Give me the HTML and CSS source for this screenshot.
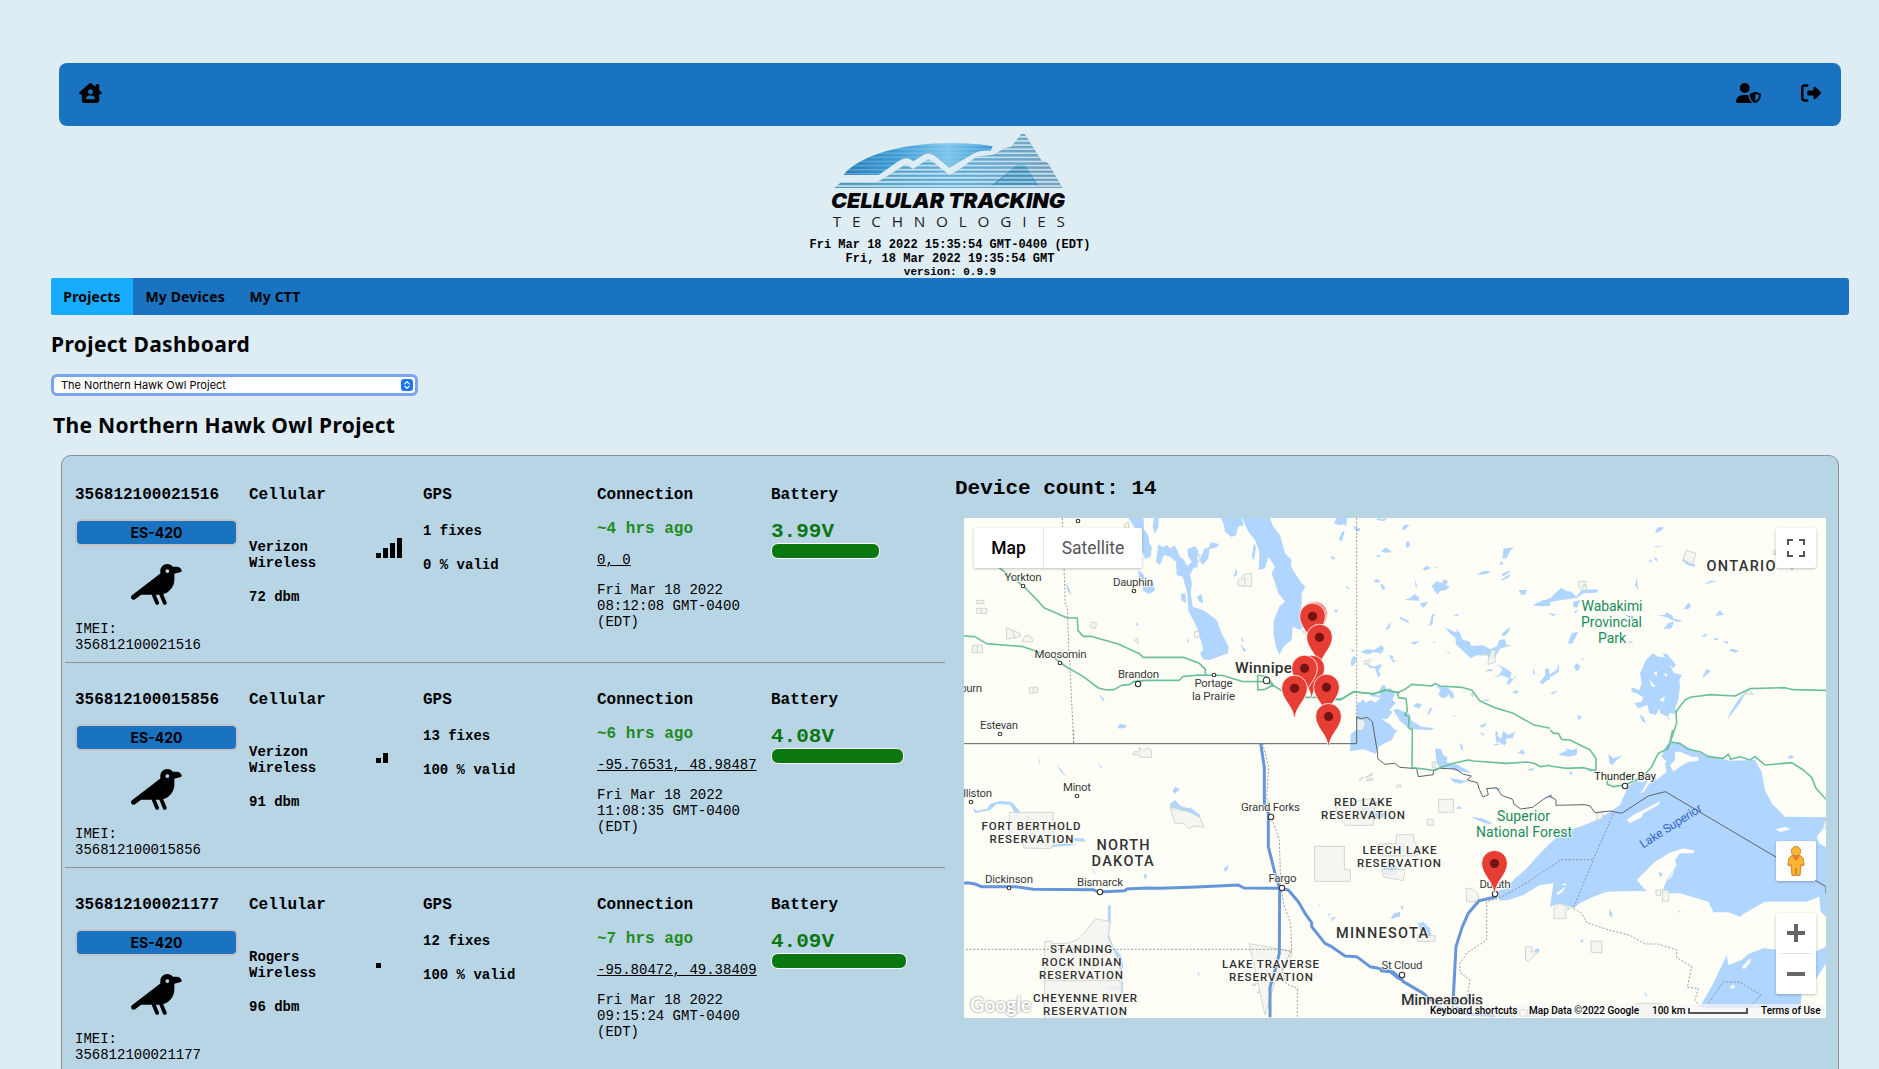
FILE: index.html
```html
<!DOCTYPE html>
<html lang="en">
<head>
<meta charset="utf-8">
<title>Project Dashboard</title>
<link rel="stylesheet" href="styles.css">
</head>
<body>
<svg class="defs" width="0" height="0" aria-hidden="true">
  <symbol id="crow" viewBox="0 0 640 512"><path d="M456 0c-48.6 0-88 39.4-88 88v29.2L12.5 390.6c-14 10.8-16.6 30.9-5.9 44.9s30.9 16.6 44.9 5.9L126.1 384H259.2l46.6 113.1c5 12.3 19.1 18.1 31.3 13.1s18.1-19.1 13.1-31.3L311.1 384H352c1.1 0 2.1 0 3.2 0l46.6 113.2c5 12.3 19.1 18.1 31.3 13.1s18.1-19.1 13.1-31.3l-42-102C484.9 354.1 544 280 544 192V128v-8l80.5-20.1c8.6-2.1 13.8-10.8 11.6-19.4C629 52 603.4 32 574 32H523.9C507.7 12.5 483.3 0 456 0zm0 64a24 24 0 1 1 0 48 24 24 0 1 1 0-48z"/></symbol>
  <symbol id="pin" viewBox="-14 -43 28 44" overflow="visible"><path d="M-.6 1C-1.300-10-12.900-17-12.900-28.200A12.900 12.900 0 0 1 12.900-28.200C12.900-17 1.300-10 .6 1z" fill="#e63e35" stroke="#fff" stroke-width=".8"/><circle cy="-28" r="4.600" fill="#741412"/></symbol>
</svg>
<div class="page">
  <header class="topbar">
    <svg class="icon-home" viewBox="0 0 576 512"><path d="M575.8 255.500c0 18-15 32.100-32 32.100h-32l.7 160.200c.2 35.500-28.500 64.300-64 64.300H128.100c-35.300 0-64-28.700-64-64V287.600H32c-18 0-32-14-32-32.100c0-9 3-17 10-24L266.400 8c7-7 15-8 22-8s15 2 21 7L416 100.700V64c0-17.700 14.300-32 32-32h32c17.700 0 32 14.300 32 32V185l52.800 46.400c8 7 12 15 11 24zM352 224c0-35.300-28.700-64-64-64s-64 28.700-64 64s28.700 64 64 64s64-28.700 64-64zm-96 96c-44.200 0-80 35.800-80 80c0 8.800 7.200 16 16 16H384c8.800 0 16-7.200 16-16c0-44.200-35.800-80-80-80H256z"/></svg>
    <div class="topbar-right">
      <svg class="icon-user" viewBox="0 0 640 512"><path d="M224 256A128 128 0 1 0 224 0a128 128 0 1 0 0 256zm-45.700 48C79.800 304 0 383.800 0 482.300C0 498.700 13.300 512 29.700 512H418.300c1.800 0 3.500-.2 5.300-.5c-76.300-55.100-99.800-141-103.100-200.200c-16.100-4.800-33.100-7.300-50.700-7.300H178.300zm308.800-78.300l-120 48C358 277.400 352 286.200 352 296c0 63.300 25.900 168.800 134.800 214.200c5.900 2.500 12.600 2.500 18.500 0C614.100 464.800 640 359.300 640 296c0-9.800-6-18.600-15.100-22.300l-120-48c-5.700-2.300-12.100-2.300-17.800 0zM591.400 312c-3.900 50.700-27.200 116.700-95.400 149.700V273.800L591.400 312z"/></svg>
      <svg class="icon-exit" viewBox="0 0 512 512"><path d="M377.900 105.900L500.700 228.700c7.200 7.200 11.300 17.100 11.300 27.300s-4.100 20.100-11.300 27.300L377.900 406.100c-6.400 6.400-15 9.900-24 9.900c-18.700 0-33.900-15.200-33.900-33.900l0-62.100-128 0c-17.700 0-32-14.300-32-32l0-64c0-17.700 14.300-32 32-32l128 0 0-62.100c0-18.700 15.200-33.900 33.900-33.900c9 0 17.600 3.600 24 9.900zM160 96L96 96c-17.700 0-32 14.300-32 32l0 256c0 17.700 14.300 32 32 32l64 0c17.700 0 32 14.300 32 32s-14.300 32-32 32l-64 0c-53 0-96-43-96-96L0 128C0 75 43 32 96 32l64 0c17.700 0 32 14.300 32 32s-14.300 32-32 32z"/></svg>
    </div>
  </header>

  <section class="brand">
    <svg class="logo" viewBox="150 36 711 294">
      <defs>
        <linearGradient id="sky" x1="0" x2="1"><stop offset="0" stop-color="#2a7db8"/><stop offset=".35" stop-color="#3d9bd4"/><stop offset=".7" stop-color="#7cc5ea"/><stop offset="1" stop-color="#3b9bd6"/></linearGradient>
        <linearGradient id="rock" x1="0" x2="1"><stop offset="0" stop-color="#4a97b8"/><stop offset=".5" stop-color="#5fb0dc"/><stop offset="1" stop-color="#6f9db8"/></linearGradient>
        <pattern id="stripes" width="20" height="12.300" patternUnits="userSpaceOnUse" y="41"><rect width="20" height="5" y="7" fill="#deecf4" opacity=".85"/></pattern>
        <pattern id="thin" width="20" height="12.300" patternUnits="userSpaceOnUse" y="41"><rect width="20" height="3" y="8" fill="#9fd0ea" opacity=".6"/></pattern>
      </defs>
      <path d="M190 165C240 105 370 70 500 70Q590 69 638 79L632 92Q600 90 578 102L508 144L465 108Q443 93 425 108L400 124Q380 105 355 124L296 165Z" fill="url(#sky)"/>
      <path d="M190 165C240 105 370 70 500 70Q590 69 638 79L632 92Q600 90 578 102L508 144L465 108Q443 93 425 108L400 124Q380 105 355 124L296 165Z" fill="url(#thin)"/>
      <path d="M163 204L184 186H290L310 176L370 137L378 134L400 147L428 128L445 118L462 128L508 166L540 147L590 110L640 104L675 84L694 80L724 42H734L785 122L803 128L848 204Z" fill="url(#rock)"/>
      <path d="M163 204L184 186H290L310 176L370 137L378 134L400 147L428 128L445 118L462 128L508 166L540 147L590 110L640 104L675 84L694 80L724 42H734L785 122L803 128L848 204Z" fill="url(#stripes)"/>
      <path d="M635 196L712 134H734L774 196Z" fill="#2585b5" opacity=".65"/><path d="M635 204L712 134H734L774 204Z" fill="url(#stripes)" opacity=".6"/>
      <text x="153" y="263" font-family="Inter, sans-serif" font-size="62" font-weight="900" font-style="italic" textLength="702" lengthAdjust="spacingAndGlyphs" fill="#050505">CELLULAR TRACKING</text>
      <text x="158" y="321" font-family="Open Sans, sans-serif" font-size="46" font-weight="400" textLength="697" fill="#1d1d1f">TECHNOLOGIES</text>
    </svg>
    <div class="stamp">Fri Mar 18 2022 15:35:54 GMT-0400 (EDT)</div>
    <div class="stamp">Fri, 18 Mar 2022 19:35:54 GMT</div>
    <div class="version">version: 0.9.9</div>
  </section>

  <nav class="tabs">
    <a class="tab active">Projects</a><a class="tab">My Devices</a><a class="tab">My CTT</a>
  </nav>

  <h1 class="heading">Project Dashboard</h1>
  <div class="select"><span>The Northern Hawk Owl Project</span>
    <svg viewBox="0 0 12 12"><rect width="12" height="12" rx="3" fill="#1a77fb"/><path d="M3.800 4.800L6 2.600l2.200 2.200M3.800 7.200L6 9.400l2.200-2.200" fill="none" stroke="#fff" stroke-width="1.200" stroke-linecap="round" stroke-linejoin="round"/></svg>
  </div>
  <h2 class="heading project">The Northern Hawk Owl Project</h2>

  <main class="panel">
    <div class="devices">
      <article class="device">
        <div class="cell"><h3>356812100021516</h3><button class="model">ES-420</button><svg class="bird"><use href="#crow"/></svg><p class="imei">IMEI:<br>356812100021516</p></div>
        <div class="cell"><h3>Cellular</h3><div class="cellular"><div class="carrier"><b>Verizon<br>Wireless</b><b>72 dbm</b></div><div class="bars"><i class="b1"></i><i class="b2"></i><i class="b3"></i><i class="b4"></i></div></div></div>
        <div class="cell"><h3>GPS</h3><b class="fixes">1 fixes</b><b class="valid">0 % valid</b></div>
        <div class="cell"><h3>Connection</h3><b class="ago">~4 hrs ago</b><a class="coords">0, 0</a><p class="date">Fri Mar 18 2022 08:12:08 GMT-0400 (EDT)</p></div>
        <div class="cell"><h3>Battery</h3><b class="volts">3.99V</b><div class="charge" style="width:109px"></div></div>
      </article>
      <article class="device">
        <div class="cell"><h3>356812100015856</h3><button class="model">ES-420</button><svg class="bird"><use href="#crow"/></svg><p class="imei">IMEI:<br>356812100015856</p></div>
        <div class="cell"><h3>Cellular</h3><div class="cellular"><div class="carrier"><b>Verizon<br>Wireless</b><b>91 dbm</b></div><div class="bars"><i class="b1"></i><i class="b2"></i></div></div></div>
        <div class="cell"><h3>GPS</h3><b class="fixes">13 fixes</b><b class="valid">100 % valid</b></div>
        <div class="cell"><h3>Connection</h3><b class="ago">~6 hrs ago</b><a class="coords">-95.76531, 48.98487</a><p class="date">Fri Mar 18 2022 11:08:35 GMT-0400 (EDT)</p></div>
        <div class="cell"><h3>Battery</h3><b class="volts">4.08V</b><div class="charge" style="width:133px"></div></div>
      </article>
      <article class="device">
        <div class="cell"><h3>356812100021177</h3><button class="model">ES-420</button><svg class="bird"><use href="#crow"/></svg><p class="imei">IMEI:<br>356812100021177</p></div>
        <div class="cell"><h3>Cellular</h3><div class="cellular"><div class="carrier"><b>Rogers<br>Wireless</b><b>96 dbm</b></div><div class="bars"><i class="b1"></i></div></div></div>
        <div class="cell"><h3>GPS</h3><b class="fixes">12 fixes</b><b class="valid">100 % valid</b></div>
        <div class="cell"><h3>Connection</h3><b class="ago">~7 hrs ago</b><a class="coords">-95.80472, 49.38409</a><p class="date">Fri Mar 18 2022 09:15:24 GMT-0400 (EDT)</p></div>
        <div class="cell"><h3>Battery</h3><b class="volts">4.09V</b><div class="charge" style="width:136px"></div></div>
      </article>
    </div>

    <section class="overview">
      <h2 class="count">Device count: 14</h2>
      <div class="map">
        <svg class="tiles" viewBox="964 518 862 500">
          <!-- water -->
          <g class="water">
            <g transform="translate(940 460) scale(.33333)">
              <path d="M565 174H610L613 210L625 225L628 250L636 262L632 290L615 296L606 270L600 235L585 205ZM642 174H656L655 200L645 222L638 200ZM655 253L668 262L682 255L690 265L705 256L720 290L732 300L742 318L755 305L745 290L742 268L765 258L775 272L773 322L760 325L750 345L756 370L752 400L758 440L790 450L830 480L845 520L866 560L864 580L835 590L808 600L790 598L780 580L790 570L782 540L770 500L745 452L742 400L728 350L710 345L708 305L690 290L672 285L660 315L648 305ZM780 300L792 268L808 262L812 247L838 252L830 262L808 268L805 295L788 315ZM722 402L736 400L738 430L725 422ZM770 410L785 402L790 430L778 425ZM595 330L612 345L615 365L640 370L645 392L625 402L608 390L610 370L597 355ZM843 174H905L912 195L895 200L888 225L875 231L855 215L850 190ZM907 174H990L1000 200L1020 225L1028 255L1035 280L1055 300L1052 315L1062 335L1085 370L1096 380L1085 400L1085 430L1080 470L1090 500L1080 510L1058 500L1055 540L1030 560L1018 585L1008 560L1000 520L1002 480L1018 440L1035 425L1015 400L995 340L1005 320L985 290L975 325L957 330L958 275L945 240L925 215ZM1000 340L1020 380L1010 385ZM935 290L942 250L948 262L942 300ZM376 368L385 380L395 405L384 395ZM477 702L495 720L488 722ZM532 800L540 792L560 795L556 803L538 806ZM585 490H595V500ZM740 545L745 533V550ZM905 528L912 545H905ZM898 550L920 572L912 575ZM880 350L890 325L892 345Z"/>
            </g>
            <g transform="translate(1310 516) scale(.33333)">
              <path d="M72 22L80 6H112L108 30L100 25L85 28ZM96 48L104 44L96 77L86 70ZM130 30L152 38L145 48L135 42ZM62 118L77 128L66 131ZM198 8L215 6L205 14ZM205 12L230 6L222 15ZM276 40L290 26L298 28L282 42ZM288 80L295 75L300 90L290 96ZM215 102L228 95L244 106L240 110L225 104ZM198 118L215 118L205 125ZM338 158L350 149L364 156L345 164ZM370 152H383L376 157ZM500 178L518 165L542 165L532 173ZM578 128L580 98L612 94L600 104L590 127ZM568 146L573 135L582 144ZM573 175L600 163L595 172L580 180ZM572 192L600 173L598 183L580 193ZM366 210L380 195L395 202L402 190L414 195L408 207L419 212L408 222L390 225L384 235L374 226ZM315 190L322 213L316 212ZM190 195L200 188L212 197L204 200ZM212 205L218 203L226 222L215 216ZM106 213L113 210L119 221ZM284 252L302 245L313 234L328 244L325 254ZM330 262L354 257L342 275L335 273ZM626 222H650L645 235L634 236ZM670 268L690 258L712 250L720 244V270L690 271ZM70 282L83 280L80 291ZM228 338L242 317L240 335L230 343ZM266 300L295 314L298 322L275 312ZM360 320L366 295L378 293L370 300L368 325L356 330ZM430 298L447 293L442 301ZM404 334L440 350V338L450 352L458 372L478 376L484 390L520 388L540 400L562 390L567 372L585 370L590 388L608 386L570 398L552 430L538 428L530 415L500 418L482 427L462 408L438 385L436 365L420 352ZM572 358L585 345L600 333L598 345L585 360ZM302 378L330 376L312 386ZM366 378L377 377L376 382ZM152 408L170 400L192 402L215 388L222 398L218 408L210 412L190 408L178 415L160 412ZM208 408L214 416L208 414ZM236 416L250 420L248 430L260 437L248 437ZM160 432L178 447L195 452L208 445L216 448L205 465L212 473L206 486L194 456L180 456ZM122 398L132 402L130 410ZM125 425L133 420L140 430L130 450L122 448ZM522 466L538 460L550 462L545 466ZM546 486L568 476L578 460L560 445L585 456L605 470L600 488L575 478ZM670 460L676 475H668ZM688 500L706 478L705 460L716 456L720 490L700 498ZM408 410L418 409V413ZM376 510L390 513L410 512L430 530L432 545L424 548L415 535L408 545L395 545L385 535L392 522ZM308 570L322 561L335 565L328 578ZM482 534L492 532L487 546ZM510 554L540 548L533 555ZM590 500L600 485L612 490L595 506ZM606 530L620 522L625 528L618 533ZM612 480L620 483L615 488ZM350 600L358 578L368 574L360 590ZM508 630L526 622L531 625L518 635ZM428 600L434 597L436 603ZM210 516L222 505L230 520L242 516L254 535L248 552L258 560L238 582L248 588L232 608L215 610L240 625L258 645L245 672L208 690L198 714L190 710L160 700L120 706L122 655L140 640V572L158 550L168 560L182 552L196 560L212 545L180 540L190 532L208 540ZM250 582L262 578L300 595L302 612L335 632L370 636L365 642L300 640L270 615ZM142 560L166 558L155 580L140 590ZM555 650L564 645L563 660L578 672L560 682ZM578 675L592 678L582 690ZM545 688L560 683L575 686ZM600 655L607 650L605 660ZM626 708L640 703L645 716ZM375 698H393L400 718L412 724L410 738L440 745L485 770L435 765L420 755L390 756L380 740ZM650 760L672 757L665 764ZM420 786L475 796L450 803L430 798ZM150 870L185 860L205 855L210 862L180 885L190 900L150 910L135 905ZM180 905L190 890L220 885L230 900L190 912ZM438 878L450 870L453 878ZM482 903L520 908L545 920L525 922ZM255 985L280 982L290 1000L275 1015L258 1010ZM220 1055L235 1045L262 1052L258 1072L235 1078L218 1070ZM180 988L186 985L186 993Z"/>
            </g>
            <g transform="translate(1380 460) scale(.33333)">
              <path d="M458 436L490 420L505 423L525 400L545 384L558 392L575 395L588 410L605 390L655 388L650 398L610 400L590 414L545 420L512 426L505 438ZM415 390L440 390L435 404L425 403ZM580 425L600 420L592 443L580 440ZM506 460L530 463L518 469ZM565 545L575 520L595 515L578 550L565 552ZM583 455L596 448L586 462ZM730 463L760 468L770 490L755 478ZM830 465H855L860 456L878 468L880 476L910 482L890 486L860 472ZM850 508L866 488L882 486L875 505ZM765 375L772 352V368L775 390ZM970 374L990 362L1015 362ZM910 448L925 428L934 438L925 447ZM1005 467L1020 450L1032 465ZM962 528L985 520L975 531ZM1000 540L1010 532L1015 540ZM1028 545L1042 543L1045 553ZM1045 571L1058 566L1078 573L1065 578ZM965 656L980 626L993 634ZM825 220L832 202H853L842 213ZM820 258L853 260L828 262ZM805 306L812 297L817 304ZM820 292L833 296L830 305ZM905 300L915 295L925 310L945 313V321L922 315ZM1230 322H1242L1236 332ZM66 205L72 195L88 194L72 210ZM77 255L85 242L90 255L82 264ZM480 670L490 655L530 630L538 606L536 636L505 655L490 672ZM458 625L463 632L460 640ZM510 700L535 690L520 703ZM582 620L590 610L600 617L598 630L588 633ZM600 598L612 595L608 600ZM590 766L605 768L598 783ZM752 543L762 547L740 549ZM665 500L675 502L645 505ZM780 640L798 600L818 580L835 590L855 592L870 612L880 638L906 645L898 660L900 680L895 720L886 740L888 762L870 758L862 770L840 760L838 745L828 765L808 760L802 735L775 745L762 730L785 725L790 712L770 700L754 695L755 682L778 690L785 670ZM848 580L862 583L888 615L880 625L860 600ZM865 765L870 780L863 775ZM778 763L790 770L798 790L788 785ZM1040 785L1050 758L1078 715L1103 688L1080 730L1050 768ZM0 180L18 174L15 182ZM2 275L18 265L33 275L20 278ZM2 375L15 380L8 392Z"/>
              <path class="land" d="M820 640L830 632L832 648ZM852 640L862 642L858 652ZM808 658L828 680L815 680ZM838 720L855 708L850 725Z"/>
            </g>
            <g transform="translate(940 730) scale(.33333)">
              <path d="M98 232L110 243L142 236L150 222L180 213L215 216L240 245L230 258L210 224L170 222L150 240L105 250ZM255 258L268 255L275 300L300 330L330 345L380 340L410 345L330 352L305 345L275 315ZM400 325L430 325L436 336L400 332ZM297 80L300 102L296 98ZM350 103L372 130L378 141L360 122ZM474 98L488 115L480 112ZM690 222L705 210L722 228L745 235L750 232L780 255V265L745 245L705 245L692 240ZM698 182L705 170L720 178L702 192ZM612 432H620V447L613 445ZM850 418L866 402L862 420L855 425ZM503 528L512 524V570L505 610L520 650L545 680L550 710L535 735L550 760L548 800L535 830L538 860L528 858L540 780L500 775L495 770L540 765L528 735L540 705L530 675L500 635L504 570ZM453 410L468 432L462 430ZM772 735L777 722L778 736ZM996 712L1006 715L996 738ZM932 768L952 757L945 768ZM950 788L960 778L957 790ZM1134 522L1143 528H1138ZM1170 575L1178 562L1190 562ZM1163 550L1172 552L1168 558ZM1352 565L1362 550L1380 545V560Z"/>
            </g>
            <g transform="translate(1380 730) scale(.33333)">
              <path d="M345 485L380 475L400 450L440 415L480 370L510 340L550 305L600 290L650 270L690 245L720 225L735 190L745 168L770 152L795 160L780 190L792 185L815 150L860 95L845 80L855 50L870 38L905 42L935 58L970 72L1050 92L1125 90L1145 125L1155 180L1175 220L1215 260L1338 262V285L1310 320L1318 340L1338 352V560L1322 545L1318 500L1280 515L1155 515L1090 552L1080 560L1045 547L1000 547L985 515L900 490L845 490L850 465L875 440L885 415L860 455L845 470L845 490L820 480L795 484L770 483L680 485L640 500L600 520L580 535L540 520L510 530L520 460L480 465L430 495L385 510L360 512ZM960 830L1000 760L1040 675L1045 705L1085 690L1105 672L1150 655L1200 660L1250 690L1338 650V700L1300 760L1265 790L1262 835H985ZM0 0H55L20 30L0 50ZM360 40L370 2L385 15L405 5L398 25L380 25L372 45ZM300 5L312 12L308 18ZM240 45L245 38L250 60L244 60ZM412 70L428 58L435 73ZM535 74L550 65L562 62L555 55L575 60L592 55L590 75L565 80ZM685 72L700 85L728 75L705 95L698 105L688 100ZM440 120L460 115L458 122ZM567 128L575 122L578 138ZM610 118L640 120L635 127ZM1222 80L1235 75L1243 82L1230 87ZM228 233L240 228L243 236ZM272 260L300 265L340 280L325 282L310 275ZM687 538L697 550L696 563L688 555ZM892 542L905 545L898 548ZM600 630L612 628L606 640ZM463 660L475 655L480 664L468 670ZM33 562L45 552L62 550L50 560L38 568ZM60 530L70 527L68 540ZM114 580L130 575L150 595L155 618L125 615ZM5 420L30 410L55 425L50 435L15 440ZM790 780L802 797L798 800Z"/>
              <path class="land" d="M740 270L760 255L800 235L842 213L835 225L790 250L785 262L750 280ZM885 65L900 65L935 80L955 80L955 92L925 95L900 110L880 125L870 105L885 90ZM825 135L855 100L860 125L830 150ZM770 450L800 420L825 395L870 368L910 355L945 362L940 370L900 370L885 390L890 405L860 450L845 490L800 484ZM1187 298L1215 290L1232 298L1200 306ZM530 490L545 478L558 470L545 488L532 494ZM543 462L560 460L555 467ZM1050 770L1060 763L1065 772L1055 778ZM1085 712L1105 690L1115 684L1108 702L1092 718Z"/>
              <path d="M835 426L848 430L842 444ZM495 200L515 196L518 207ZM325 175L360 173V180ZM790 155L805 150L785 185L780 180Z"/>
            </g>
          </g>

          <!-- reserves and small parks -->
          <g class="reserve">
            <g transform="translate(940 460) scale(.33333)"><path d="M109 421H132V431H109ZM110 445H140V460H110ZM124 445V460M97 556H127V578H97ZM112 556V578M199 503L240 520L242 530L210 535L199 538ZM218 512L225 535M245 545L255 527L270 528L278 540V546ZM450 500L455 485L470 490L465 507ZM268 682H293V698L268 700ZM280 684V698M554 192L566 185V205H554ZM768 295L780 282V308ZM894 360L915 342L935 340V379L894 378ZM904 360L915 352V378M583 541L594 535V552ZM763 515L778 513V532H764ZM1086 512L1102 510L1096 524Z"/></g>
            <g transform="translate(1310 516) scale(.33333)"><path d="M162 437L180 430L182 437L165 447ZM140 612L160 610L166 625L160 642L140 643ZM545 400L556 402L555 440L534 445L536 425ZM505 417H540M366 738L376 737V754H367ZM148 790L160 782L150 795ZM165 785L188 772L186 778ZM168 793H188V785ZM258 813L268 803L274 813ZM386 850H431V889H386ZM352 910H370V928H352ZM14 991H103V1060L121 1062V1096H14ZM78 868L196 845L190 928H107L78 895ZM202 985L258 982L260 956H310L312 975L330 1000L320 1020H215ZM215 1060L220 1083L280 1094L285 1060Z"/></g>
            <g transform="translate(1380 460) scale(.33333)"><path d="M595 364H620L605 390L596 380ZM608 378L620 373V390H610M918 271L948 280L938 311L909 300ZM1180 271H1188V283H1180ZM1094 702L1106 690L1121 703Z"/></g>
            <g transform="translate(940 730) scale(.33333)"><path d="M598 52L610 62L622 53L635 62V82H598V76L578 72L583 65L598 66ZM208 247H339V350L330 356L250 354V335H208ZM690 230L705 280L730 280L746 296L762 288L792 292L780 262L745 245ZM314 635L335 632V640L382 640L410 630L440 600L467 566L512 575L505 620L535 690L545 740V752L548 865H314ZM314 752H540M928 641L1057 664L1048 700L1010 740L975 855Z"/></g>
            <g transform="translate(1380 730) scale(.33333)"><path d="M522 535L540 520L570 537L558 540V566H522ZM650 250L670 245L668 265L650 272ZM632 633L666 634V669L634 667ZM437 650L458 651L453 665L475 667L445 693L436 690ZM828 480H842V496H828ZM847 480H866V514H848ZM258 474Q290 475 296 500L294 515H260ZM112 616L165 617V634H112ZM770 820H840V858H770ZM1338 265L1328 290L1338 297"/></g>
          </g>

          <!-- boundaries -->
          <g class="dotted">
            <g transform="translate(940 460) scale(.33333)"><path d="M367 174L376 435L382 440L386 560L391 640L401 850M1250 174V770"/></g>
            <g transform="translate(940 730) scale(.33333)"><path d="M401 0V40M78 658H1018L1057 664M968 40L986 110L980 200L990 250L1018 330L1022 460L1030 520L1052 580L1055 660L1025 720L1040 762L1072 775V862"/></g>
            <g transform="translate(1380 730) scale(.33333)"><path d="M700 252L640 388L580 535L605 550L620 578L680 598L750 616L795 642H835L890 660V682L935 710L922 772L955 775L945 810L960 830M638 389H545L430 465L356 505L320 515V630L262 668L240 700V728L270 750L262 800L240 830M985 820L1030 756H1080L1144 796L1080 858"/></g>
          </g>
          <g class="border">
            <g transform="translate(940 460) scale(.33333)"><path d="M72 851H1250V770"/></g>
            <g transform="translate(1310 516) scale(.33333)"><path d="M139 603L155 608L172 604L187 617L203 712V728L225 745L254 742L270 754L320 758L325 782L370 776V765L390 757L437 759L460 775L484 780L472 792L502 800L508 820L519 843L535 836L530 818L560 815L575 838L608 850L612 864L632 879L668 874L700 850L724 837"/></g>
            <g transform="translate(1380 730) scale(.33333)"><path d="M510 198L528 210V226L615 224L630 228L645 248L690 243L725 250L805 198L856 185L1338 470V490"/></g>
          </g>

          <!-- roads -->
          <g class="road">
            <g transform="translate(940 460) scale(.33333)"><path d="M176 322L250 378L296 425L312 443L382 474H412L414 512L430 529H452L535 552L600 582L608 592H730L778 610L796 628V646M72 528L104 530L140 551L250 560L340 592L375 618L430 650L475 684L500 690L522 689L545 676L570 673L580 665L620 661H718L728 650L775 645L845 646L905 664L980 665L1022 690L1080 712L1130 712L1200 720L1240 695L1300 702L1340 690L1380 698M953 645V690L975 688L1000 675L980 650L953 645"/></g>
            <g transform="translate(1310 516) scale(.33333)"><path d="M75 550L98 548L130 528L190 533L225 522L262 530L285 520L305 505L365 510L376 502L390 510L455 514L485 522L500 542L510 555L555 575L610 592L670 626L720 637M262 530L266 545L288 548L292 585L284 597L298 602L295 635L307 642L306 755L370 763L390 755L430 742L475 732L490 735L590 742L650 738L672 742L692 752L720 748"/></g>
            <g transform="translate(1380 730) scale(.33333)"><path d="M511 0L520 10H535L545 28L570 30L630 60L648 85V122M682 150V163L700 170L735 165L790 140L815 110L835 70L860 58L870 36L900 40L925 58L960 65L985 80L1030 85L1045 72L1052 88L1080 80L1110 90L1125 80L1155 105L1235 98L1270 120L1295 142L1308 175L1338 208M870 36L878 0M510 108L560 115L610 113L648 122"/></g>
            <g transform="translate(1380 460) scale(.33333)"><path d="M862 870L870 848L890 790L888 755L915 720L930 712L990 704L1065 708L1110 686L1215 683L1240 689L1338 691"/></g>
          </g>
          <g class="highway">
            <g transform="translate(940 730) scale(.33333)"><path d="M72 460L82 458L105 462L124 470H225L280 478L460 479L475 486L555 482L560 477L620 474L660 475L770 471L895 465L912 474L1015 475L1045 480L1075 515L1095 550L1115 578V590L1155 640L1175 650L1215 678L1250 680L1290 710L1315 715L1350 724L1375 745L1390 748M962 40L973 112V220L985 250V350L1005 430L1019 475L1018 670L1003 730L990 772V862"/></g>
            <g transform="translate(1380 730) scale(.33333)"><path d="M0 722L40 726L70 755L130 790L200 850M350 500L297 512L265 550L247 590L228 650L220 800L240 850L345 858"/></g>
          </g>

          <!-- place markers -->
          <g class="towns">
            <circle cx="1078" cy="521" r="1.800"/><circle cx="1023" cy="586" r="1.800"/><circle cx="1134" cy="591" r="1.800"/><circle cx="1060" cy="663" r="1.800"/><circle cx="1138" cy="684" r="2.700"/><circle cx="1214" cy="675" r="1.800"/><circle cx="1266.500" cy="680.500" r="3.200"/><circle cx="1000" cy="734" r="1.800"/><circle cx="971" cy="802" r="1.800"/><circle cx="1077" cy="796" r="1.800"/><circle cx="1271" cy="817" r="2.700"/><circle cx="1009" cy="888" r="1.800"/><circle cx="1100" cy="892" r="2.700"/><circle cx="1282" cy="888" r="2.700"/><circle cx="1625" cy="786" r="2.700"/><circle cx="1495" cy="894" r="2.700"/><circle cx="1402" cy="975" r="2.700"/>
          </g>

          <!-- labels -->
          <g class="labels">
            <text x="1023" y="581" textLength="37">Yorkton</text><text x="1133" y="586" textLength="40">Dauphin</text><text x="1060.500" y="658" textLength="52">Moosomin</text><text x="1138.500" y="678" textLength="41">Brandon</text><text x="1213.500" y="687" textLength="38">Portage</text><text x="1213.500" y="700" textLength="43">la Prairie</text><text x="999" y="729" textLength="38">Estevan</text><text x="982" y="692" class="end" textLength="42">Weyburn</text><text x="992" y="797" class="end" textLength="41">Williston</text><text x="1077" y="791" textLength="28">Minot</text><text x="1270.500" y="811" textLength="59">Grand Forks</text><text x="1009" y="883" textLength="48">Dickinson</text><text x="1100" y="886" textLength="46">Bismarck</text><text x="1282.500" y="882" textLength="28">Fargo</text><text x="1625" y="780" textLength="62" class="dark">Thunder Bay</text><text x="1495" y="888" textLength="31">Duluth</text><text x="1402" y="969" textLength="41">St Cloud</text><text x="1522" y="1017" textLength="48" opacity=".5">Eau Claire</text>
            <g class="city"><text x="1235" y="673" class="start" textLength="66">Winnipeg</text><text x="1442" y="1005" textLength="82">Minneapolis</text></g>
            <g class="tribal"><text x="1031" y="830" textLength="99">FORT BERTHOLD</text><text x="1031.500" y="843" textLength="84">RESERVATION</text><text x="1363" y="806" textLength="58">RED LAKE</text><text x="1363" y="819" textLength="84">RESERVATION</text><text x="1399.500" y="854" textLength="74">LEECH LAKE</text><text x="1399" y="867" textLength="84">RESERVATION</text><text x="1081" y="953" textLength="62">STANDING</text><text x="1081.500" y="966" textLength="80">ROCK INDIAN</text><text x="1081" y="979" textLength="84">RESERVATION</text><text x="1085" y="1002" textLength="104">CHEYENNE RIVER</text><text x="1085" y="1015" textLength="84">RESERVATION</text><text x="1270.500" y="968" textLength="97">LAKE TRAVERSE</text><text x="1271" y="981" textLength="84">RESERVATION</text></g>
            <g class="state"><text x="1123" y="850" textLength="53">NORTH</text><text x="1122.500" y="866" textLength="62">DAKOTA</text><text x="1382" y="938" textLength="92">MINNESOTA</text><text x="1741" y="571" textLength="69">ONTARIO</text></g>
            <g class="park"><text x="1612" y="611" textLength="61">Wabakimi</text><text x="1611.500" y="627" textLength="61">Provincial</text><text x="1612" y="643" textLength="28">Park</text><text x="1523.500" y="821" textLength="53">Superior</text><text x="1524" y="837" textLength="96">National Forest</text></g>
            <text class="lake" transform="translate(1643 848.500) rotate(-32.500)" textLength="71">Lake Superior</text>
          </g>

          <g class="pins">
            <use href="#pin" x="1300.500" y="599.500" width="28" height="44"/><use href="#pin" x="1299.500" y="600.500" width="28" height="44"/>
            <use href="#pin" x="1298.500" y="601.300" width="28" height="44"/><use href="#pin" x="1305.500" y="622.300" width="28" height="44"/>
            <use href="#pin" x="1297.700" y="653.300" width="28" height="44"/><use href="#pin" x="1290.500" y="653.300" width="28" height="44"/>
            <use href="#pin" x="1312.500" y="672.300" width="28" height="44"/><use href="#pin" x="1280.500" y="673.300" width="28" height="44"/>
            <use href="#pin" x="1314.500" y="701.500" width="28" height="44"/><use href="#pin" x="1480.500" y="848.500" width="28" height="44"/>
          </g>
        </svg>

        <div class="map-type"><span class="on">Map</span><span>Satellite</span></div>
        <div class="ctl fullscreen"><svg viewBox="0 0 18 18"><path d="M0 0h6v2H2v4H0zM12 0h6v6h-2V2h-4zM0 12h2v4h4v2H0zM16 12h2v6h-6v-2h4z" fill="#555"/></svg></div>
        <div class="ctl pegman"><svg viewBox="0 0 18 30"><path d="M5 9.500L2 12L.8 19L3 20L4 18.500L5 29.500H8.400L9 22L9.600 29.500H13L14 18.500L15 20L17.200 19L16 12L13 9.500Z" fill="#fbb330" stroke="#c47f1c" stroke-width=".9"/><circle cx="9" cy="5.200" r="4.700" fill="#fbb330" stroke="#b98134" stroke-width=".9"/><path d="M5.200 10.200H12.800L9 15Z" fill="#e5762a"/></svg></div>
        <div class="ctl zoom"><svg class="plus" viewBox="0 0 18 18"><path d="M7 0h4v7h7v4h-7v7H7v-7H0V7h7z" fill="#666"/></svg><hr><svg class="minus" viewBox="0 0 18 4"><path d="M0 0h18v4H0z" fill="#666"/></svg></div>
        <div class="google">Google</div>
        <div class="credits"><span class="c1">Keyboard shortcuts</span><span class="c2">Map Data ©2022 Google</span><span class="c3">100 km</span><i></i><span class="c4">Terms of Use</span></div>
      </div>
    </section>
  </main>
</div>
</body>
</html>
```
FILE: styles.css
```css
* { box-sizing: border-box; }
body { margin: 0; background: #deecf4; color: #000; font-family: "Noto Sans", sans-serif; }
h1, h2, h3, p { margin: 0; }
svg { display: block; }
.defs { position: absolute; }

.page { height: 1069px; overflow: hidden; padding: 63px 30px 0 51px; }

.topbar { height: 63px; margin: 0 8px; padding: 0 20px 3px; display: flex; align-items: center; justify-content: space-between; background: #1a73c0; border-radius: 8px; }
.topbar-right { display: flex; gap: 40px; }
.icon-home { width: 23px; height: 20px; }
.icon-user { width: 25px; height: 20px; }
.icon-exit { width: 20px; height: 20px; }

.brand { height: 152px; padding-top: 6px; display: flex; flex-direction: column; align-items: center; font-family: "Liberation Mono", monospace; font-weight: bold; }
.logo { width: 237px; height: 98px; margin: 0 3px 8px 0; flex: none; }
.stamp { font-size: 12px; line-height: 14px; }
.version { font-size: 11px; line-height: 12px; }

.tabs { display: flex; height: 37px; background: #1a73c0; border-radius: 3px; overflow: hidden; font-weight: bold; font-size: 14px; line-height: 37px; letter-spacing: .15px; }
.tab { padding: 0 12.300px; }
.active { background: #18acff; }

.heading { font-size: 21px; line-height: 28px; font-weight: bold; margin-top: 15px; white-space: nowrap; letter-spacing: .38px; }
.select { width: 367px; height: 22px; margin-top: 16px; padding: 0 2px 0 7px; display: flex; align-items: center; justify-content: space-between; background: #fff; border: 3px solid #7ba3f0; border-radius: 6px; font: 11px Inter, sans-serif; }
.select svg { width: 12px; height: 12px; }
.project { margin: 15px 0 0 2px; letter-spacing: .34px; }

.panel { width: 1778px; height: 900px; margin: 16px 0 0 10px; padding: 2px 0 0 3px; display: flex; align-items: flex-start; background: #b8d5e5; border: 1px solid #8b9093; border-radius: 10px; font-family: "Liberation Mono", monospace; }
.devices { width: 880px; }
.device { height: 205px; padding: 28px 0 0 10px; display: grid; grid-template-columns: repeat(5, 174px); border-bottom: 1px solid #8b9093; font-size: 14px; line-height: 16px; }
.cell { display: flex; flex-direction: column; align-items: flex-start; }
.cell h3 { font-size: 16px; line-height: 18px; }
.model { width: 163px; height: 27px; margin: 15px 0 0; padding: 0; background: #1a73c0; border: 2px solid #c1c3c8; border-radius: 6px; font: bold 14px Inter, sans-serif; color: #000; }
.bird { width: 51px; height: 41px; margin: 18px 0 16px 56px; }
.cellular { display: flex; margin-top: 34px; }
.carrier { width: 127px; padding-top: 1px; display: flex; flex-direction: column; gap: 18px; }
.bars { height: 20px; display: flex; gap: 2px; align-items: flex-end; }
.bars i { width: 5px; background: #000; }
.b1 { height: 5px; }
.b2 { height: 10px; }
.b3 { height: 15px; }
.b4 { height: 20px; }
.fixes { margin-top: 19px; }
.valid { margin-top: 18px; }
.ago { margin-top: 16px; font-size: 16px; line-height: 18px; color: #228b22; }
.coords { margin-top: 14px; text-decoration: underline; white-space: nowrap; }
.date { width: 160px; margin-top: 14px; }
.volts { margin-top: 17px; font-size: 21px; line-height: 22px; color: #0b7710; }
.charge { height: 16px; background: #0b7710; border: 1px solid #fff; border-radius: 7px; }

.overview { margin-left: 10px; padding-top: 19px; }
.count { font-size: 21px; line-height: 24px; }
.map { position: relative; width: 862px; height: 500px; margin: 17px 0 0 9px; background: #fffef6; overflow: hidden; font-family: Roboto, sans-serif; }
.tiles { width: 862px; height: 500px; }
.water { fill: #b0d5ff; }
.land { fill: #fffef6; }
.reserve { fill: #f5f3f0; fill-opacity: .85; stroke: #c3d3c8; stroke-width: 2.500px; }
.dotted { fill: none; stroke: #777; stroke-width: 2.200px; stroke-dasharray: 6 5; }
.border { fill: none; stroke: #5d6266; stroke-width: 3px; }
.road { fill: none; stroke: #6bbf99; stroke-width: 4.800px; stroke-linejoin: round; }
.highway { fill: none; stroke: #6695da; stroke-width: 9px; stroke-linejoin: round; }
.towns { fill: #fff; stroke: #333; stroke-width: 1.100px; }
.labels { font-size: 11.500px; fill: #36393c; text-anchor: middle; stroke: #fffef6; stroke-width: 2px; stroke-opacity: .8; paint-order: stroke; stroke-linejoin: round; }
.labels .start { text-anchor: start; }
.labels .end { text-anchor: end; }
.labels .dark { fill: #222; }
.city { font-size: 15.500px; font-weight: 500; fill: #303236; }
.tribal { font-size: 11.500px; font-weight: 500; fill: #303236; }
.state { font-size: 14.500px; font-weight: 500; fill: #303236; }
.park { font-size: 14px; fill: #188c5a; }
.labels .lake { font-size: 12px; fill: #3566c4; text-anchor: start; stroke: none; }

.map-type { position: absolute; left: 10px; top: 10px; display: flex; height: 40px; font-size: 17.500px; line-height: 40px; color: #565656; text-align: center; box-shadow: 0 1px 3px rgba(0,0,0,.25); background: #fff; border-radius: 2px; }
.map-type span { width: 99px; border-left: 1px solid #e6e6e6; }
.map-type .on { width: 69px; border: 0; color: #000; font-weight: 500; }
.ctl { position: absolute; right: 10px; width: 40px; background: #fff; border-radius: 2px; box-shadow: 0 1px 3px rgba(0,0,0,.25); display: flex; flex-direction: column; align-items: center; }
.fullscreen { top: 10px; height: 40px; padding-top: 11px; }
.fullscreen svg { width: 18px; height: 18px; }
.pegman { top: 323px; height: 40px; padding-top: 5px; }
.pegman svg { width: 18px; height: 30px; }
.zoom { top: 395px; height: 81px; padding-top: 11px; }
.plus { width: 18px; height: 18px; }
.zoom hr { width: 30px; height: 1px; margin: 11px 0 18px; border: 0; background: #e0e0e0; }
.minus { width: 18px; height: 4px; }
.google { position: absolute; left: 6px; bottom: 2px; font: 700 20px/24px Lato, sans-serif; letter-spacing: -.4px; color: #fff; text-shadow: 0 0 2px #999, 0 0 2px #aaa; }
.credits { position: absolute; right: 0; bottom: 0; width: 401px; height: 14px; padding-left: 5px; display: flex; align-items: center; background: rgba(245,245,245,.72); font-size: 10px; font-weight: 500; line-height: 14px; color: #000; white-space: nowrap; }
.c1 { width: 99px; }
.c2 { width: 123px; }
.c3 { width: 36px; }
.credits i { width: 60px; height: 6px; border: solid #555; border-width: 0 2px 2px; }
.c4 { margin-left: 13px; }
```
